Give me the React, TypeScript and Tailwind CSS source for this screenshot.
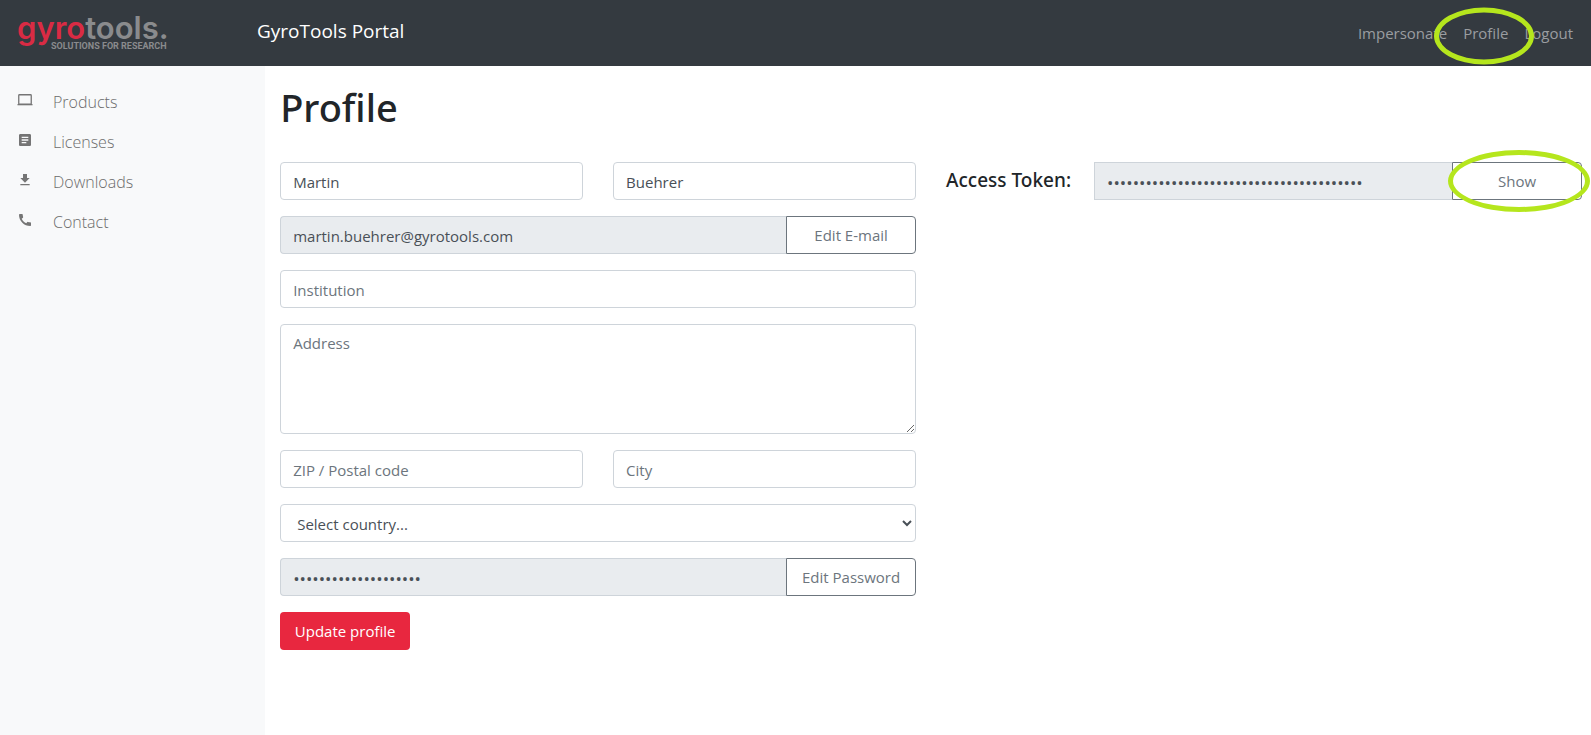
import type { ReactNode } from "react";
import { MdArticle, MdCall, MdFileDownload } from "react-icons/md";

const field =
  "block h-[38px] w-full min-w-0 rounded border border-[#ced4da] bg-white px-3 pt-0.5 text-[15px] text-[#495057] placeholder:text-[#6c757d] placeholder:opacity-100";
const lockedField =
  "block h-[38px] w-full min-w-0 flex-1 border border-r-0 border-[#ced4da] bg-[#e9ecef] px-3 pt-0.5 text-[#495057]";
const addonButton =
  "h-[38px] w-[130px] shrink-0 rounded-r border border-[#6c757d] bg-white text-[15px] text-[#6c757d]";

function LaptopIcon() {
  return (
    <svg width="16" height="16" viewBox="0 0 16 16" fill="none" aria-hidden="true">
      <rect x="1.75" y="2.75" width="12.5" height="9.5" rx="0.75" stroke="currentColor" strokeWidth="1.3" />
      <path d="M0.5 12h15v1.3H0.5z" fill="currentColor" />
    </svg>
  );
}

function SideLink({ icon, label }: { icon: ReactNode; label: string }) {
  return (
    <li>
      <a href="#" className="flex h-10 items-center gap-5 text-[16px] font-light text-[#6c6c6c]">
        <span className="-mt-1 w-4 text-[#757575]">{icon}</span>
        {label}
      </a>
    </li>
  );
}

function Logo() {
  return (
    <a href="#" aria-label="gyrotools" className="flex w-[240px] flex-col pb-0.5 pl-[17px] font-['Inter',sans-serif]">
      <span className="text-[31px] leading-7 font-semibold text-[#8a8b8d]">
        <span className="text-[#d92b44]">gyro</span>tools.
      </span>
      <span className="pl-[34px] font-['Roboto',sans-serif] text-[9px] leading-2 font-bold text-[#8a8b8d]">
        SOLUTIONS FOR RESEARCH
      </span>
    </a>
  );
}

export default function App() {
  return (
    <div className="flex min-h-screen flex-col overflow-x-hidden bg-white font-['Open_Sans',sans-serif] text-[#212529]">
      <header className="flex h-[66px] items-center bg-[#343a40]">
        <Logo />
        <span className="pb-1 pl-[17px] text-[19px] text-white">GyroTools Portal</span>
        <nav className="ml-auto flex gap-4 pr-[18px] text-[15px] text-[#9a9da0]">
          <a href="#">Impersonate</a>
          <a href="#" className="relative">
            Profile
            <span className="pointer-events-none absolute top-[14px] left-[21px] z-10 h-[57px] w-[100px] -translate-1/2 rounded-[50%] border-[5px] border-[#b5e61d]" />
          </a>
          <a href="#">Logout</a>
        </nav>
      </header>

      <div className="flex flex-1">
        <aside className="w-1/6 shrink-0 bg-[#f8f9fa] pt-4 pl-[17px]">
          <ul>
            <SideLink icon={<LaptopIcon />} label="Products" />
            <SideLink icon={<MdArticle size={16} />} label="Licenses" />
            <SideLink icon={<MdFileDownload size={16} />} label="Downloads" />
            <SideLink icon={<MdCall size={16} />} label="Contact" />
          </ul>
        </aside>

        <main className="flex-1 pt-4 pr-[9px] pl-[15px]">
          <h1 className="font-['Noto_Sans',sans-serif] text-[38px] leading-[50px] font-medium">Profile</h1>
          <div className="mt-[30px] grid grid-cols-2 items-start gap-[30px]">
            <form className="flex flex-col gap-4" onSubmit={(e) => e.preventDefault()}>
              <div className="grid grid-cols-2 gap-[30px]">
                <input aria-label="First name" defaultValue="Martin" className={field} />
                <input aria-label="Last name" defaultValue="Buehrer" className={field} />
              </div>
              <div className="flex">
                <input aria-label="E-mail" readOnly defaultValue="martin.buehrer@gyrotools.com" className={`${lockedField} rounded-l text-[15px]`} />
                <button type="button" className={addonButton}>Edit E-mail</button>
              </div>
              <input aria-label="Institution" placeholder="Institution" className={field} />
              <textarea
                aria-label="Address"
                placeholder="Address"
                className="block h-[110px] w-full rounded border border-[#ced4da] bg-white px-3 py-1.5 text-[15px] leading-6 text-[#495057] placeholder:text-[#6c757d] placeholder:opacity-100"
              />
              <div className="grid grid-cols-2 gap-[30px]">
                <input aria-label="ZIP / Postal code" placeholder="ZIP / Postal code" className={field} />
                <input aria-label="City" placeholder="City" className={field} />
              </div>
              <select aria-label="Country" className="block h-[38px] w-full rounded border border-[#ced4da] bg-white pt-0.5 pl-3 text-[15px] text-[#495057]">
                <option>Select country...</option>
              </select>
              <div className="flex">
                <input aria-label="Password" type="password" readOnly defaultValue="12345678901234567890" className={`${lockedField} rounded-l text-[17px]`} />
                <button type="button" className={addonButton}>Edit Password</button>
              </div>
              <button type="submit" className="h-[38px] w-[130px] rounded bg-[#e8273f] text-[15px] text-white">
                Update profile
              </button>
            </form>

            <div className="flex">
              <label htmlFor="token" className="w-[148px] shrink-0 pt-1 font-['Noto_Sans',sans-serif] text-[19px] leading-7 font-medium">
                Access Token:
              </label>
              <input
                id="token"
                type="password"
                readOnly
                defaultValue="1234567890123456789012345678901234567890"
                className={`${lockedField} text-[17px]`}
              />
              <div className="relative">
                <button type="button" className={addonButton}>Show</button>
                <span className="pointer-events-none absolute top-1/2 left-[67px] z-10 h-[62px] w-[142px] -translate-1/2 rounded-[50%] border-[5px] border-[#b5e61d]" />
              </div>
            </div>
          </div>
        </main>
      </div>
    </div>
  );
}
